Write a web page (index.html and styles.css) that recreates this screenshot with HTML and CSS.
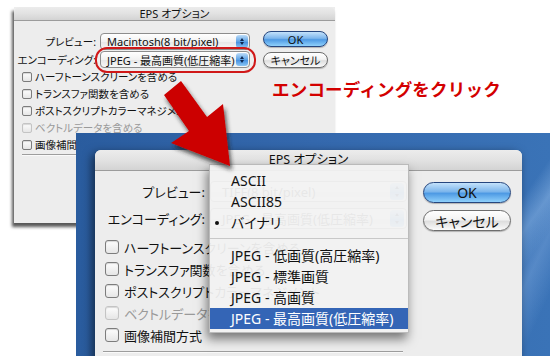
FILE: index.html
```html
<!DOCTYPE html>
<html lang="ja">
<head>
    <meta charset="UTF-8">
    <title>EPS オプション</title>
    <link rel="stylesheet" href="styles.css">
</head>
<body>
    <div class="stage">
        <!-- 小さい方のダイアログ -->
        <div class="win win-back">
            <div class="titlebar">EPS オプション</div>
            <div class="win-body">
                <div class="top">
                    <div class="fields">
                        <div class="field"><span class="lbl">プレビュー:</span><span class="popup">Macintosh(8 bit/pixel)<i class="step"></i></span></div>
                        <div class="field"><span class="lbl">エンコーディング:</span><span class="popup">JPEG - 最高画質(低圧縮率)<i class="step"></i></span></div>
                    </div>
                    <div class="btns">
                        <span class="btn btn-ok">OK</span>
                        <span class="btn">キャンセル</span>
                    </div>
                </div>
                <ul class="checks">
                    <li><i class="cb"></i>ハーフトーンスクリーンを含める</li>
                    <li><i class="cb"></i>トランスファ関数を含める</li>
                    <li><i class="cb"></i>ポストスクリプトカラーマネジメント</li>
                    <li class="off"><i class="cb"></i>ベクトルデータを含める</li>
                    <li><i class="cb"></i>画像補間方式</li>
                </ul>
                <div class="sep"></div>
            </div>
        </div>
        <div class="ring"></div>
        <div class="note">エンコーディングをクリック</div>

        <!-- デスクトップと大きいダイアログ -->
        <div class="desk"></div>
        <div class="win win-front">
            <div class="titlebar">EPS オプション</div>
            <div class="win-body">
                <div class="top">
                    <div class="fields">
                        <div class="field"><span class="lbl">プレビュー:</span><span class="popup">TIFF(8 bit/pixel)<i class="step"></i></span></div>
                        <div class="field"><span class="lbl">エンコーディング:</span><span class="popup">JPEG - 最高画質(低圧縮率)<i class="step"></i></span></div>
                    </div>
                    <div class="btns">
                        <span class="btn btn-ok">OK</span>
                        <span class="btn">キャンセル</span>
                    </div>
                </div>
                <ul class="checks">
                    <li><i class="cb"></i>ハーフトーンスクリーンを含める</li>
                    <li><i class="cb"></i>トランスファ関数を含める</li>
                    <li><i class="cb"></i>ポストスクリプトカラーマネジメント</li>
                    <li class="off"><i class="cb"></i>ベクトルデータを含める</li>
                    <li><i class="cb"></i>画像補間方式</li>
                </ul>
                <div class="sep"></div>
            </div>
        </div>

        <ul class="menu">
            <li>ASCII</li>
            <li>ASCII85</li>
            <li class="checked">バイナリ</li>
            <li class="menu-sep"></li>
            <li>JPEG - 低画質(高圧縮率)</li>
            <li>JPEG - 標準画質</li>
            <li>JPEG - 高画質</li>
            <li class="sel">JPEG - 最高画質(低圧縮率)</li>
        </ul>

        <svg class="arrow" width="560" height="356" viewBox="0 0 560 356">
            <defs>
                <filter id="sh" x="-20%" y="-20%" width="150%" height="150%">
                    <feDropShadow dx="2" dy="4" stdDeviation="2" flood-color="#222" flood-opacity="0.75"/>
                </filter>
            </defs>
            <polygon filter="url(#sh)" fill="#cc0000"
                points="181,81 207,117 223,104 230,166 171,143 189,131 164,95"/>
        </svg>
    </div>
</body>
</html>
```

FILE: styles.css
```css
body {
    margin: 0;
    padding: 0;
    background-color: #ffffff;
    font-family: "Noto Sans", "Noto Sans CJK JP", sans-serif;
    font-feature-settings: "palt";
    color: #111;
}
.stage {
    position: relative;
    width: 560px;
    height: 356px;
    overflow: hidden;
}
ul {
    list-style: none;
    margin: 0;
    padding: 0;
}

/* ---- windows ---- */
.win {
    position: absolute;
    background-color: #ededed;
    box-sizing: border-box;
}
.titlebar {
    text-align: center;
    background: linear-gradient(#ececec, #e2e2e2 50%, #d3d3d3);
    border-bottom: 1px solid #9c9c9c;
    border-radius: 6px 6px 0 0;
    box-sizing: border-box;
}
.top {
    display: flex;
    align-items: flex-start;
}
.fields {
    display: flex;
    flex-direction: column;
}
.field {
    display: flex;
    align-items: center;
}
.lbl {
    text-align: right;
    white-space: nowrap;
}
.popup {
    position: relative;
    display: flex;
    align-items: center;
    box-sizing: border-box;
    white-space: nowrap;
    background: linear-gradient(#ffffff, #f2f2f2 50%, #e6e6e6 51%, #f7f7f7);
    border: 1px solid #8d8d8d;
    border-radius: 4px;
}
.step {
    position: absolute;
    top: 1px;
    bottom: 1px;
    border-radius: 3px;
    background: linear-gradient(#bcdcf8, #5ea3e6 50%, #3f8ce0 51%, #8cc6f4);
}
.step::before, .step::after {
    content: "";
    position: absolute;
    left: 50%;
    border-left: 2px solid transparent;
    border-right: 2px solid transparent;
    transform: translateX(-50%);
}
.step::before {
    top: 3px;
    border-bottom: 3px solid #0d2650;
}
.step::after {
    bottom: 3px;
    border-top: 3px solid #0d2650;
}
.btns {
    display: flex;
    flex-direction: column;
}
.btn {
    display: flex;
    align-items: center;
    justify-content: center;
    box-sizing: border-box;
    border: 1px solid #6d6d6d;
    background: linear-gradient(#ffffff, #f3f3f3 45%, #dedede 55%, #fafafa);
    box-shadow: 0 1px 1px rgba(0, 0, 0, 0.25);
}
.btn-ok {
    border-color: #26467e;
    background: linear-gradient(#c4e2fb, #7db6ec 45%, #4e9ae4 55%, #8fd0fb);
}
.checks li {
    display: flex;
    align-items: center;
    white-space: nowrap;
}
.cb {
    flex: none;
    box-sizing: border-box;
    border: 1px solid #7c7c7c;
    border-radius: 3px;
    background: linear-gradient(#fdfdfd, #e6e6e6);
    box-shadow: inset 0 1px 1px rgba(0, 0, 0, 0.15);
}
.checks li.off {
    color: #9a9a9a;
}
.checks li.off .cb {
    border-color: #c4c4c4;
}
.sep {
    border-top: 1px solid #9d9d9d;
    border-bottom: 1px solid #fafafa;
}

/* ---- back dialog ---- */
.win-back {
    left: 14px;
    top: 7px;
    width: 321px;
    height: 216px;
    box-shadow: -2px 4px 3px rgba(0, 0, 0, 0.65);
    font-size: 10.5px;
}
.win-back .titlebar {
    height: 14px;
    line-height: 13px;
    font-size: 11px;
}
.win-back .top {
    padding-top: 10px;
}
.win-back .fields {
    gap: 1px;
    padding-top: 2px;
}
.win-back .lbl {
    width: 82px;
    margin-right: 4px;
}
.win-back .popup {
    width: 150px;
    height: 17px;
    padding-left: 6px;
    font-size: 11px;
}
.win-back .step {
    right: 1px;
    width: 12px;
}
.win-back .btns {
    gap: 5px;
    margin-left: 13px;
}
.win-back .btn {
    width: 65px;
    height: 16px;
    border-radius: 8px;
    font-size: 11px;
}
.win-back .checks {
    padding-left: 8px;
}
.win-back .checks li {
    height: 17px;
    gap: 3px;
}
.win-back .cb {
    width: 10px;
    height: 10px;
    border-radius: 2px;
}
.win-back .sep {
    margin: 1px 5px 0 8px;
}

.ring {
    position: absolute;
    left: 95px;
    top: 47px;
    width: 157px;
    height: 22px;
    border: 2px solid #d01818;
    border-radius: 12px;
}
.note {
    position: absolute;
    left: 272px;
    top: 76px;
    font-size: 17.5px;
    font-weight: bold;
    color: #d30000;
    font-feature-settings: normal;
    font-family: "Noto Sans CJK JP", sans-serif;
    letter-spacing: 0.2px;
}

/* ---- desktop + front dialog ---- */
.desk {
    position: absolute;
    left: 76px;
    top: 133px;
    width: 474px;
    height: 223px;
    background:
        linear-gradient(125deg, transparent 78%, rgba(150, 190, 235, 0.45) 82%, transparent 86%),
        linear-gradient(115deg, transparent 86%, rgba(140, 180, 230, 0.35) 90%, transparent 95%),
        linear-gradient(90deg, #2a5c9e, #3468ad 50%, #3a73b7);
}
.win-front {
    left: 95px;
    top: 150px;
    width: 427px;
    height: 215px;
    border-radius: 6px 6px 0 0;
    box-shadow: -3px 3px 10px rgba(0, 0, 0, 0.55);
    font-size: 13px;
}
.win-front .titlebar {
    height: 21px;
    line-height: 20px;
    font-size: 12.5px;
}
.win-front .top {
    padding-top: 10px;
}
.win-front .fields {
    gap: 6px;
}
.win-front .lbl {
    width: 110px;
    margin-right: 5px;
}
.win-front .popup {
    width: 197px;
    height: 21px;
    padding-left: 11px;
    color: #333;
}
.win-front .step {
    right: 2px;
    width: 14px;
}
.win-front .btns {
    gap: 7px;
    margin-left: 16px;
    padding-top: 1px;
}
.win-front .btn {
    width: 88px;
    height: 21px;
    border-radius: 11px;
    font-size: 14px;
}
.win-front .checks {
    padding-left: 10px;
    margin-top: 5px;
}
.win-front .checks li {
    height: 22px;
    gap: 5px;
}
.win-front .cb {
    width: 14px;
    height: 14px;
}
.win-front .sep {
    width: 300px;
    margin: 5px 0 0 8px;
}

/* ---- popup menu ---- */
.menu {
    position: absolute;
    left: 209px;
    top: 164px;
    width: 200px;
    padding: 5px 0 3px;
    background-color: rgba(242, 242, 242, 0.94);
    border: 1px solid rgba(150, 150, 150, 0.6);
    box-sizing: border-box;
    box-shadow: -2px 6px 10px rgba(0, 0, 0, 0.5);
    font-size: 14px;
}
.menu li {
    position: relative;
    height: 21px;
    line-height: 21px;
    padding-left: 21px;
    white-space: nowrap;
}
.menu li.checked::before {
    content: "";
    position: absolute;
    left: 5px;
    top: 9px;
    width: 4px;
    height: 4px;
    border-radius: 50%;
    background-color: #111;
}
.menu li.menu-sep {
    height: 12px;
    background: linear-gradient(transparent 5px, #c8c8c8 5px, #c8c8c8 6px, transparent 6px);
}
.menu li.sel {
    background-color: #3465b6;
    color: #ffffff;
}

.arrow {
    position: absolute;
    left: 0;
    top: 0;
    pointer-events: none;
}
```
